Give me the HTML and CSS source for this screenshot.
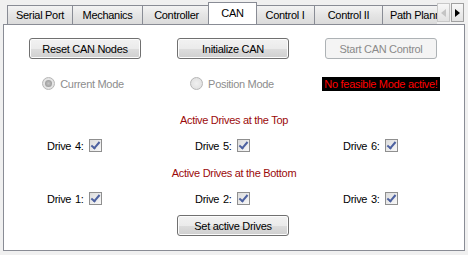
FILE: index.html
```html
<!DOCTYPE html>
<html lang="en">
<head>
    <meta charset="UTF-8">
    <title>CAN</title>
    <link rel="stylesheet" href="styles.css">
</head>
<body>
    <div class="tabbar">
        <div class="tabs">
            <div class="tab">Serial Port</div>
            <div class="tab">Mechanics</div>
            <div class="tab">Controller</div>
            <div class="tab active">CAN</div>
            <div class="tab">Control I</div>
            <div class="tab">Control II</div>
            <div class="tab">Path Planning</div>
        </div>
        <div class="scroller">
            <span class="arrow off">
                <svg width="5" height="8" viewBox="0 0 5 8"><path d="M5 0V8L0 4Z" fill="#c4c4c4"/></svg>
            </span>
            <span class="arrow">
                <svg width="5" height="8" viewBox="0 0 5 8"><path d="M0 0V8L5 4Z" fill="#000"/></svg>
            </span>
        </div>
    </div>

    <div class="panel">
        <div class="row">
            <div class="cell"><button class="btn">Reset CAN Nodes</button></div>
            <div class="cell"><button class="btn">Initialize CAN</button></div>
            <div class="cell"><button class="btn" disabled>Start CAN Control</button></div>
        </div>

        <div class="row modes">
            <div class="cell">
                <span class="radio checked"></span>
                <span class="muted">Current Mode</span>
            </div>
            <div class="cell">
                <span class="radio"></span>
                <span class="muted">Position Mode</span>
            </div>
            <div class="cell">
                <span class="alert">No feasible Mode active!</span>
            </div>
        </div>

        <div class="group-title top">Active Drives at the Top</div>
        <div class="row drives">
            <div class="cell drive">Drive 4: <span class="check"></span></div>
            <div class="cell drive">Drive 5: <span class="check"></span></div>
            <div class="cell drive">Drive 6: <span class="check"></span></div>
        </div>

        <div class="group-title bottom">Active Drives at the Bottom</div>
        <div class="row drives">
            <div class="cell drive">Drive 1: <span class="check"></span></div>
            <div class="cell drive">Drive 2: <span class="check"></span></div>
            <div class="cell drive">Drive 3: <span class="check"></span></div>
        </div>

        <div class="row last">
            <div class="cell"></div>
            <div class="cell"><button class="btn">Set active Drives</button></div>
            <div class="cell"></div>
        </div>
    </div>
</body>
</html>
```

FILE: styles.css
```css
body {
    margin: 0;
    width: 468px;
    height: 255px;
    overflow: hidden;
    background-color: #f0f0f0;
    font-family: "Liberation Sans", Arial, sans-serif;
    font-size: 11px;
    letter-spacing: -0.3px;
    color: #000;
}
.tabbar {
    position: relative;
    height: 24px;
}
.tabs {
    display: flex;
    align-items: flex-end;
    width: 437px;
    height: 24px;
    padding-left: 7px;
    box-sizing: border-box;
    overflow: hidden;
    white-space: nowrap;
}
.tab {
    box-sizing: border-box;
    flex-shrink: 0;
    height: 19px;
    padding: 0 7px;
    margin-right: -1px;
    line-height: 19px;
    border: 1px solid #898c95;
    border-bottom: none;
    background: linear-gradient(#f3f3f3, #e5e5e5 50%, #dbdbdb);
    text-align: center;
}
.tab:nth-child(1) { width: 66px; }
.tab:nth-child(2) { width: 71px; }
.tab:nth-child(3) { width: 69px; }
.tab:nth-child(5) { width: 60px; }
.tab:nth-child(6) { width: 69px; }
.tab:nth-child(7) { width: 80px; text-align: left; overflow: hidden; }
.tab.active {
    width: 49px;
    height: 22px;
    margin: 0 -2px 0 -2px;
    padding-bottom: 2px;
    line-height: 20px;
    background: #fff;
    position: relative;
    z-index: 2;
}
.tab.active + .tab { margin-left: 0; }
.scroller {
    position: absolute;
    top: 3px;
    left: 437px;
    display: flex;
    gap: 1px;
}
.arrow {
    box-sizing: border-box;
    display: flex;
    align-items: center;
    justify-content: center;
    width: 13px;
    height: 19px;
    border: 1px solid #a0a0a0;
    background: linear-gradient(#f7f7f7, #e2e2e2);
}
.arrow.off {
    border-color: #c8c8c8;
}
.panel {
    box-sizing: border-box;
    position: relative;
    z-index: 1;
    height: 227px;
    margin: 0 3px 0 3px;
    padding: 13px 0 0 7px;
    border: 1px solid #898c95;
    background: #fff;
}
.row {
    display: grid;
    grid-template-columns: repeat(3, 148px);
}
.cell {
    display: flex;
    align-items: center;
    justify-content: center;
    height: 21px;
}
.btn {
    box-sizing: border-box;
    width: 112px;
    height: 21px;
    padding: 0;
    border: 1px solid #707070;
    border-radius: 3px;
    background: linear-gradient(#f2f2f2, #ebebeb 50%, #dddddd 51%, #cfcfcf);
    font-family: inherit;
    font-size: 11px;
    letter-spacing: -0.3px;
    color: #000;
    box-shadow: inset 0 0 0 1px #fcfcfc;
}
.btn:disabled {
    border-color: #adb2b5;
    background: #f4f4f4;
    color: #8a8a8a;
    box-shadow: none;
}
.modes {
    margin-top: 14px;
}
.modes .cell {
    gap: 5px;
}
.modes .cell:first-child { padding-right: 4px; }
.modes .cell:nth-child(2) { padding-right: 2px; }
.radio {
    box-sizing: border-box;
    width: 13px;
    height: 13px;
    border: 1px solid #b6b6b6;
    border-radius: 50%;
    background: radial-gradient(#f0f0f0, #dcdcdc);
    position: relative;
}
.radio.checked::after {
    content: "";
    position: absolute;
    left: 2px;
    top: 2px;
    width: 7px;
    height: 7px;
    border-radius: 50%;
    background: radial-gradient(#c4c4c4, #8d8d8d);
}
.muted {
    color: #8d8d8d;
}
.alert {
    background: #000;
    color: #ff0000;
    padding: 1px 2px;
    line-height: 12px;
}
.group-title {
    margin-left: -7px;
    height: 14px;
    line-height: 14px;
    text-align: center;
    color: #9b0a0a;
}
.group-title.top {
    margin-top: 19px;
}
.group-title.bottom {
    margin-top: 10px;
}
.drives {
    margin-top: 8px;
}
.drive {
    justify-content: flex-start;
    padding-left: 36px;
    gap: 5px;
    word-spacing: 1px;
}
.check {
    box-sizing: border-box;
    width: 13px;
    height: 13px;
    border: 1px solid #8f8f8f;
    background: linear-gradient(135deg, #dcdcdc, #f8f8f8);
    position: relative;
}
.check::after {
    content: "";
    position: absolute;
    left: 3px;
    top: 0px;
    width: 3px;
    height: 7px;
    border: solid #4d61a0;
    border-width: 0 2px 2px 0;
    transform: rotate(40deg);
}
.last {
    margin-top: 6px;
}
```
